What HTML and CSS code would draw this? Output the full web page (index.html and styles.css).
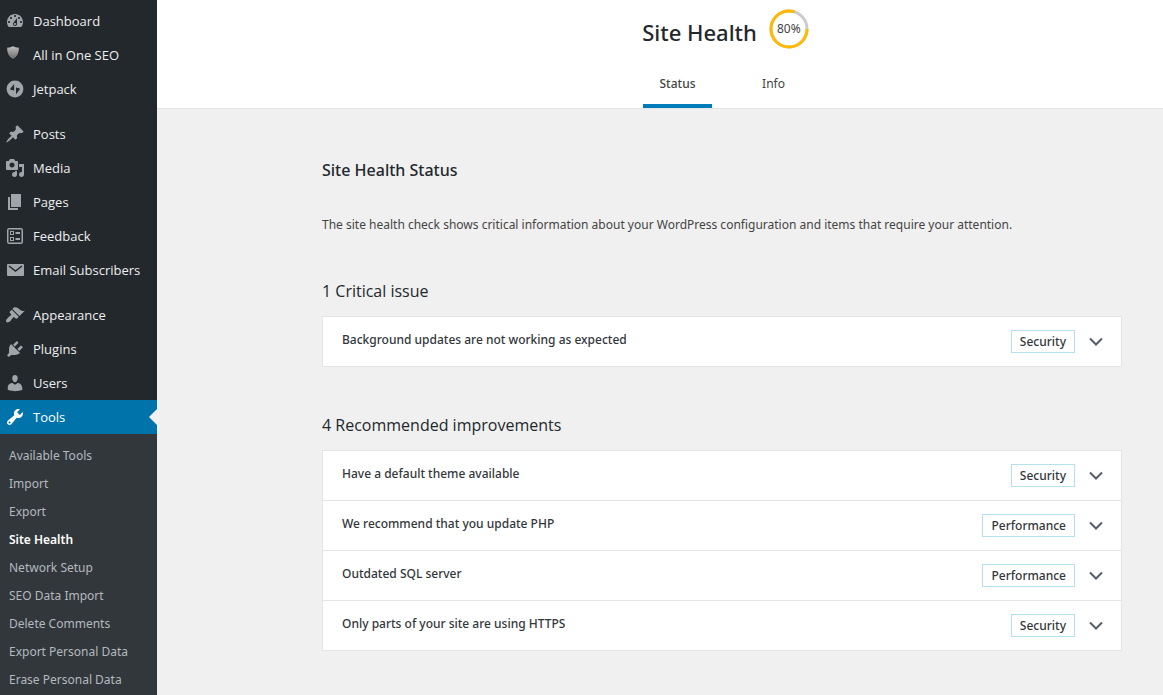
FILE: index.html
```html
<!DOCTYPE html>
<html lang="en">
<head>
<meta charset="utf-8">
<title>Site Health</title>
<link rel="stylesheet" href="styles.css">
</head>
<body>
<div class="layout">
  <nav class="sidebar" aria-label="Main menu">
    <ul class="menu">
      <li><a class="menu-link" href="#"><svg class="icon" viewBox="0 0 20 20"><path d="M3.76 16h12.48c1.1-1.37 1.76-3.11 1.76-5 0-4.42-3.58-8-8-8s-8 3.58-8 8c0 1.89.66 3.63 1.76 5zM10 4c.55 0 1 .45 1 1s-.45 1-1 1-1-.45-1-1 .45-1 1-1zM6 6c.55 0 1 .45 1 1s-.45 1-1 1-1-.45-1-1 .45-1 1-1zm8 0c.55 0 1 .45 1 1s-.45 1-1 1-1-.45-1-1 .45-1 1-1zm-5.37 5.55L12 7v6c0 1.1-.9 2-2 2s-2-.9-2-2c0-.57.24-1.08.63-1.45zM4 10c.55 0 1 .45 1 1s-.45 1-1 1-1-.45-1-1 .45-1 1-1zm12 0c.55 0 1 .45 1 1s-.45 1-1 1-1-.45-1-1 .45-1 1-1zm-5 3c0-.55-.45-1-1-1s-1 .45-1 1 .45 1 1 1 1-.45 1-1z"/></svg>Dashboard</a></li>
      <li><a class="menu-link" href="#"><svg class="icon" viewBox="0 0 20 20"><defs><linearGradient id="shield" x1="0" y1="0" x2="0" y2="1"><stop offset="0" stop-color="#c4c4c4"/><stop offset="1" stop-color="#666"/></linearGradient></defs><path fill="url(#shield)" stroke="#111" stroke-width=".6" d="M8 .7c1.600 1.100 3.800 1.500 6.200 1.600.3 5.500-1.700 9.700-6.200 12.200C3.500 12 1.500 7.800 1.800 2.300 4.200 2.200 6.400 1.800 8 .7z"/></svg>All in One SEO</a></li>
      <li><a class="menu-link" href="#"><svg class="icon" viewBox="0 0 20 20"><path fill-rule="evenodd" d="M10 1.600a8.400 8.400 0 1 0 0 16.800 8.400 8.400 0 0 0 0-16.800zM9.100 5v6.600l-3.200-.8c-.6-.2-.8-.7-.5-1.200zM11 15.200V8.400l3.200.8c.6.200.8.700.5 1.200z"/></svg>Jetpack</a></li>
    </ul>
    <ul class="menu">
      <li><a class="menu-link" href="#"><svg class="icon" viewBox="0 0 20 20"><path d="M10.440 3.020l1.820-1.820 6.360 6.350-1.830 1.820c-1.050-.68-2.480-.57-3.410.36l-.75.75c-.92.93-1.040 2.350-.35 3.410l-1.830 1.820-2.410-2.410-2.800 2.790c-.42.42-3.380 2.710-3.800 2.290s1.860-3.390 2.280-3.810l2.790-2.790L4.100 9.360l1.830-1.820c1.050.69 2.480.57 3.400-.36l.75-.75c.93-.92 1.050-2.350.36-3.410z"/></svg>Posts</a></li>
      <li><a class="menu-link" href="#"><svg class="icon" viewBox="0 0 20 20"><path d="M13 11V4c0-.55-.45-1-1-1h-1.670L9 1H5L3.670 3H2c-.55 0-1 .45-1 1v7c0 .55.45 1 1 1h10c.55 0 1-.45 1-1zM7 4.500c1.380 0 2.500 1.120 2.500 2.500S8.380 9.500 7 9.500 4.500 8.380 4.500 7 5.620 4.500 7 4.500zM14 6h5v10.500c0 1.380-1.120 2.500-2.500 2.500S14 17.880 14 16.500s1.120-2.500 2.500-2.500c.17 0 .34.020.5.050V9h-3V6zm-4 8.050V13h2v3.500c0 1.380-1.120 2.500-2.500 2.500S7 17.880 7 16.500 8.120 14 9.500 14c.17 0 .34.020.5.050z"/></svg>Media</a></li>
      <li><a class="menu-link" href="#"><svg class="icon" viewBox="0 0 20 20"><path d="M6 15V2h10v13H6zm-1 1h8v2H3V5h2v11z"/></svg>Pages</a></li>
      <li><a class="menu-link" href="#"><svg class="icon" viewBox="0 0 20 20"><path fill-rule="evenodd" d="M4 2h12a2 2 0 0 1 2 2v12a2 2 0 0 1-2 2H4a2 2 0 0 1-2-2V4a2 2 0 0 1 2-2zm-.5 1.500v13h13v-13zM5 5h4v4H5zm1 1v2h2V6zM5 11h4v4H5zm1 1v2h2v-2zM10.500 6H15v2h-4.500zM10.500 12H15v2h-4.500z"/></svg>Feedback</a></li>
      <li><a class="menu-link" href="#"><svg class="icon" viewBox="0 0 20 20"><path d="M3 4h15a1 1 0 0 1 1 1v10a1 1 0 0 1-1 1H3a1 1 0 0 1-1-1V5a1 1 0 0 1 1-1z"/><path d="M4 6l6.500 5L17 6" fill="none" stroke="#23282d" stroke-width="1.500"/></svg>Email Subscribers</a></li>
    </ul>
    <ul class="menu">
      <li><a class="menu-link" href="#"><svg class="icon" viewBox="0 0 20 20"><path d="M14.480 11.060L7.410 3.990l1.500-1.500c.5-.56 2.300-.47 3.510.32 1.210.8 1.430 1.280 2.910 2.100 1.180.64 2.450 1.260 4.450.85zm-.71.71L6.700 4.700 4.930 6.470c-.39.39-.39 1.020 0 1.410l1.060 1.060c.39.39.39 1.030 0 1.420-.6.6-1.430 1.110-2.210 1.690-.35.26-.7.53-1.010.84C1.430 14.230.4 16.080 1.400 17.070c.99 1 2.840-.03 4.180-1.360.31-.31.58-.66.85-1.020.57-.78 1.080-1.610 1.690-2.210.39-.39 1.020-.39 1.410 0l1.060 1.060c.39.39 1.020.39 1.410 0z"/></svg>Appearance</a></li>
      <li><a class="menu-link" href="#"><svg class="icon" viewBox="0 0 20 20"><path d="M13.110 4.360L9.870 7.600 8 5.730l3.240-3.240c.35-.34 1.050-.2 1.560.32.52.51.66 1.210.31 1.550zm-8 1.770l.91-1.120 9.010 9.010-1.190.84c-.71.71-2.630 1.160-3.820 1.160H6.140L4.900 17.260c-.59.59-1.540.59-2.120 0-.59-.58-.59-1.530 0-2.120l1.240-1.240v-3.880c0-1.130.4-3.190 1.090-3.890zm7.260 3.970l3.240-3.240c.34-.35 1.040-.21 1.550.31.52.51.66 1.210.31 1.550l-3.240 3.250z"/></svg>Plugins</a></li>
      <li><a class="menu-link" href="#"><svg class="icon" viewBox="0 0 20 20"><path d="M10 9.250c-2.270 0-2.730-3.440-2.730-3.440C7 4.020 7.820 2 9.970 2c2.160 0 2.980 2.020 2.710 3.810 0 0-.41 3.440-2.680 3.440zm0 2.570L12.720 10c2.390 0 4.520 2.330 4.520 4.530v2.490s-3.650 1.130-7.240 1.130c-3.650 0-7.240-1.130-7.240-1.130v-2.490c0-2.250 1.940-4.480 4.470-4.480z"/></svg>Users</a></li>
      <li><a class="menu-link menu-link-current" href="#"><svg class="icon" viewBox="0 0 20 20"><path d="M16.680 9.770c-1.340 1.340-3.300 1.670-4.950.99l-5.410 6.520c-.99.99-2.590.99-3.580 0s-.99-2.590 0-3.570l6.520-5.420c-.68-1.650-.35-3.610.99-4.950 1.280-1.280 3.120-1.620 4.720-1.060l-2.890 2.890 2.820 2.820 2.860-2.870c.53 1.580.18 3.390-1.080 4.650zM3.810 16.210c.4.390 1.040.39 1.430 0 .4-.4.4-1.040 0-1.430-.39-.4-1.030-.4-1.430 0-.39.39-.39 1.030 0 1.430z"/></svg>Tools</a></li>
    </ul>
    <ul class="submenu">
      <li><a class="submenu-link" href="#">Available Tools</a></li>
      <li><a class="submenu-link" href="#">Import</a></li>
      <li><a class="submenu-link" href="#">Export</a></li>
      <li><a class="submenu-link submenu-link-current" href="#" aria-current="page">Site Health</a></li>
      <li><a class="submenu-link" href="#">Network Setup</a></li>
      <li><a class="submenu-link" href="#">SEO Data Import</a></li>
      <li><a class="submenu-link" href="#">Delete Comments</a></li>
      <li><a class="submenu-link" href="#">Export Personal Data</a></li>
      <li><a class="submenu-link" href="#">Erase Personal Data</a></li>
    </ul>
  </nav>
  <main class="main">
    <header class="header">
      <div class="title-row">
        <h1 class="title">Site Health</h1>
        <div class="progress">
          <svg class="progress-ring" viewBox="0 0 40 40"><circle class="ring-track" cx="20" cy="20" r="18"/><circle class="ring-value" cx="20" cy="20" r="18" pathLength="100" stroke-dasharray="80 100"/></svg>
          <span class="progress-label">80%</span>
        </div>
      </div>
      <nav class="tabs" aria-label="Secondary menu">
        <a class="tab tab-active" href="#" aria-current="true">Status</a>
        <a class="tab" href="#">Info</a>
      </nav>
    </header>
    <div class="content">
      <h2 class="heading">Site Health Status</h2>
      <p class="intro">The site health check shows critical information about your WordPress configuration and items that require your attention.</p>
      <section class="issues">
        <h3 class="issues-title">1 Critical issue</h3>
        <div class="accordion">
          <button class="row" type="button" aria-expanded="false"><span class="row-title">Background updates are not working as expected</span><span class="badge">Security</span><svg class="chevron" viewBox="0 0 14 10"><path d="M1 1.500l6 6 6-6"/></svg></button>
        </div>
      </section>
      <section class="issues">
        <h3 class="issues-title">4 Recommended improvements</h3>
        <div class="accordion">
          <button class="row" type="button" aria-expanded="false"><span class="row-title">Have a default theme available</span><span class="badge">Security</span><svg class="chevron" viewBox="0 0 14 10"><path d="M1 1.500l6 6 6-6"/></svg></button>
          <button class="row" type="button" aria-expanded="false"><span class="row-title">We recommend that you update PHP</span><span class="badge">Performance</span><svg class="chevron" viewBox="0 0 14 10"><path d="M1 1.500l6 6 6-6"/></svg></button>
          <button class="row" type="button" aria-expanded="false"><span class="row-title">Outdated SQL server</span><span class="badge">Performance</span><svg class="chevron" viewBox="0 0 14 10"><path d="M1 1.500l6 6 6-6"/></svg></button>
          <button class="row" type="button" aria-expanded="false"><span class="row-title">Only parts of your site are using HTTPS</span><span class="badge">Security</span><svg class="chevron" viewBox="0 0 14 10"><path d="M1 1.500l6 6 6-6"/></svg></button>
        </div>
      </section>
    </div>
  </main>
</div>
</body>
</html>
```
FILE: styles.css
```css
* {
  box-sizing: border-box;
}

body {
  margin: 0;
  background: #f0f0f0;
  color: #444;
  font: 12px/20px "Noto Sans", "Open Sans", sans-serif;
}

h1, h2, h3, p, ul {
  margin: 0;
  padding: 0;
}

ul {
  list-style: none;
}

a {
  color: inherit;
  text-decoration: none;
}

.layout {
  display: flex;
  min-height: 100vh;
}

.sidebar {
  flex: 0 0 157px;
  display: flex;
  flex-direction: column;
  background: #23282d;
}

.menu {
  padding-top: 11px;
}

.menu:first-child {
  padding-top: 4px;
}

.menu-link {
  position: relative;
  display: flex;
  align-items: center;
  gap: 8px;
  height: 34px;
  padding-left: 5px;
  color: #eee;
  font-family: "Open Sans", "Noto Sans", sans-serif;
  font-size: 13px;
}

.menu-link-current {
  background: #0073aa;
  color: #fff;
}

.menu-link-current::after {
  content: "";
  position: absolute;
  top: 9px;
  right: 0;
  border: 8px solid transparent;
  border-left-width: 0;
  border-right-color: #f0f0f0;
}

.icon {
  width: 20px;
  height: 20px;
  fill: #a0a5aa;
}

.menu-link-current .icon {
  fill: #fff;
}

.submenu {
  flex: 1;
  padding-top: 8px;
  background: #32373c;
}

.submenu-link {
  display: block;
  padding: 4px 9px;
  color: #b4b9be;
  white-space: nowrap;
}

.submenu-link-current {
  color: #fff;
  font-weight: 600;
}

.submenu li:last-child {
  height: 27px;
}

.main {
  flex: 1;
  min-width: 0;
}

.header {
  display: flex;
  flex-direction: column;
  align-items: center;
  padding: 9px 0 0 131px;
  border-bottom: 1px solid #e2e4e7;
  background: #fff;
}

.title-row {
  display: flex;
  gap: 12px;
}

.title {
  padding-top: 7px;
  color: #23282d;
  font-size: 22px;
  line-height: 32px;
  font-weight: 500;
}

.progress {
  display: grid;
  place-items: center;
  width: 40px;
  height: 40px;
}

.progress-ring,
.progress-label {
  grid-area: 1 / 1;
}

.progress-ring {
  width: 40px;
  height: 40px;
  fill: none;
  stroke-width: 3px;
}

.ring-track {
  stroke: #ccc;
}

.ring-value {
  stroke: #ffb900;
}

.tabs {
  display: grid;
  grid-template-columns: 1fr 1fr;
  gap: 28px;
  margin-top: 14px;
}

.tab {
  padding: 11px 16px 10px;
  border-bottom: 4px solid transparent;
  text-align: center;
}

.tab-active {
  border-bottom-color: #007cba;
  font-weight: 500;
}

.content {
  max-width: 1006px;
  padding: 48px 41px 24px 165px;
}

.heading {
  color: #23282d;
  font-size: 16px;
  line-height: 26px;
  font-weight: 500;
}

.intro {
  margin: 32px 0 43px;
}

.issues {
  margin-bottom: 45px;
}

.issues:last-child {
  margin-bottom: 0;
}

.issues-title {
  color: #23282d;
  font-family: "Open Sans", "Noto Sans", sans-serif;
  font-size: 16px;
  line-height: 26px;
  font-weight: 400;
}

.accordion {
  margin-top: 12px;
  border: 1px solid #e2e4e7;
  background: #fff;
}

.row {
  display: flex;
  align-items: center;
  width: 100%;
  height: 49px;
  padding: 0 18px 0 19px;
  border: 0;
  background: transparent;
  color: #32373c;
  font: inherit;
  font-weight: 500;
  text-align: left;
}

.row + .row {
  height: 50px;
  border-top: 1px solid #e2e4e7;
}

.row-title {
  flex: 1;
  padding-bottom: 4px;
}

.badge {
  padding: 0 8px;
  border: 1px solid #b5e1ef;
  line-height: 21px;
}

.chevron {
  width: 14px;
  height: 10px;
  margin-left: 14px;
  fill: none;
  stroke: #555d66;
  stroke-width: 2px;
}
```
